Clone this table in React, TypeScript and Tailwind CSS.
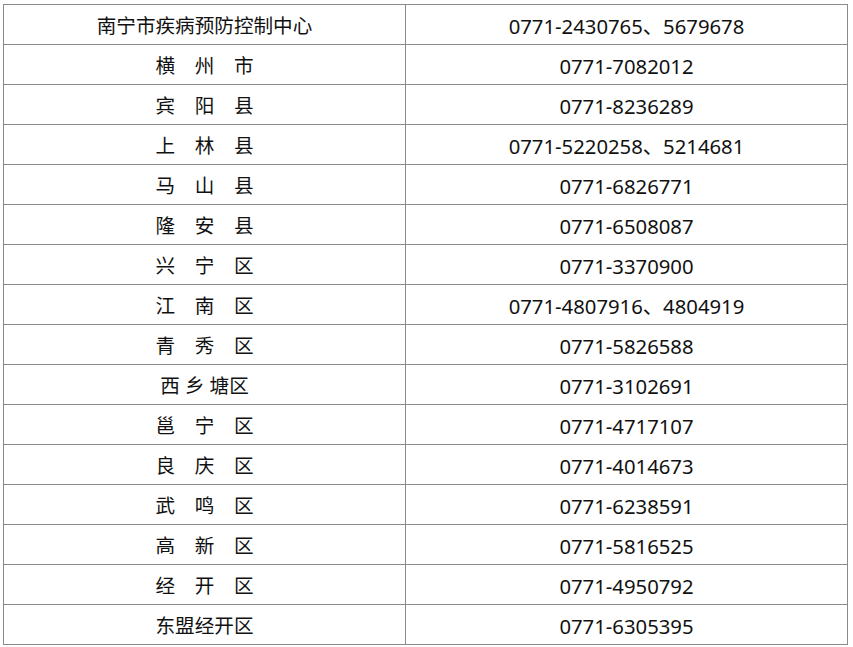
import React from 'react';

const rows: [string, string][] = [
  ['南宁市疾病预防控制中心', '0771-2430765、5679678'],
  ['横　州　市', '0771-7082012'],
  ['宾　阳　县', '0771-8236289'],
  ['上　林　县', '0771-5220258、5214681'],
  ['马　山　县', '0771-6826771'],
  ['隆　安　县', '0771-6508087'],
  ['兴　宁　区', '0771-3370900'],
  ['江　南　区', '0771-4807916、4804919'],
  ['青　秀　区', '0771-5826588'],
  ['西 乡 塘区', '0771-3102691'],
  ['邕　宁　区', '0771-4717107'],
  ['良　庆　区', '0771-4014673'],
  ['武　鸣　区', '0771-6238591'],
  ['高　新　区', '0771-5816525'],
  ['经　开　区', '0771-4950792'],
  ['东盟经开区', '0771-6305395'],
];

export default function App() {
  return (
    <div className="bg-white w-[853px] h-[647px] pt-[4px] pl-[3px] font-['Noto_Sans','Noto_Sans_CJK_SC',sans-serif] text-[#111]">
      <table className="border-collapse w-[845px] table-fixed">
        <colgroup>
          <col className="w-[402px]" />
          <col />
        </colgroup>
        <tbody>
          {rows.map(([area, phone]) => (
            <tr key={area} className="h-[40px]">
              <td className="border border-[#8a8a8a] text-center text-[19.6px] leading-none p-0 pt-[3px] whitespace-pre">
                {area}
              </td>
              <td className="border border-[#8a8a8a] text-center text-[20.3px] leading-none p-0 pt-[3px]">
                {phone}
              </td>
            </tr>
          ))}
        </tbody>
      </table>
    </div>
  );
}
